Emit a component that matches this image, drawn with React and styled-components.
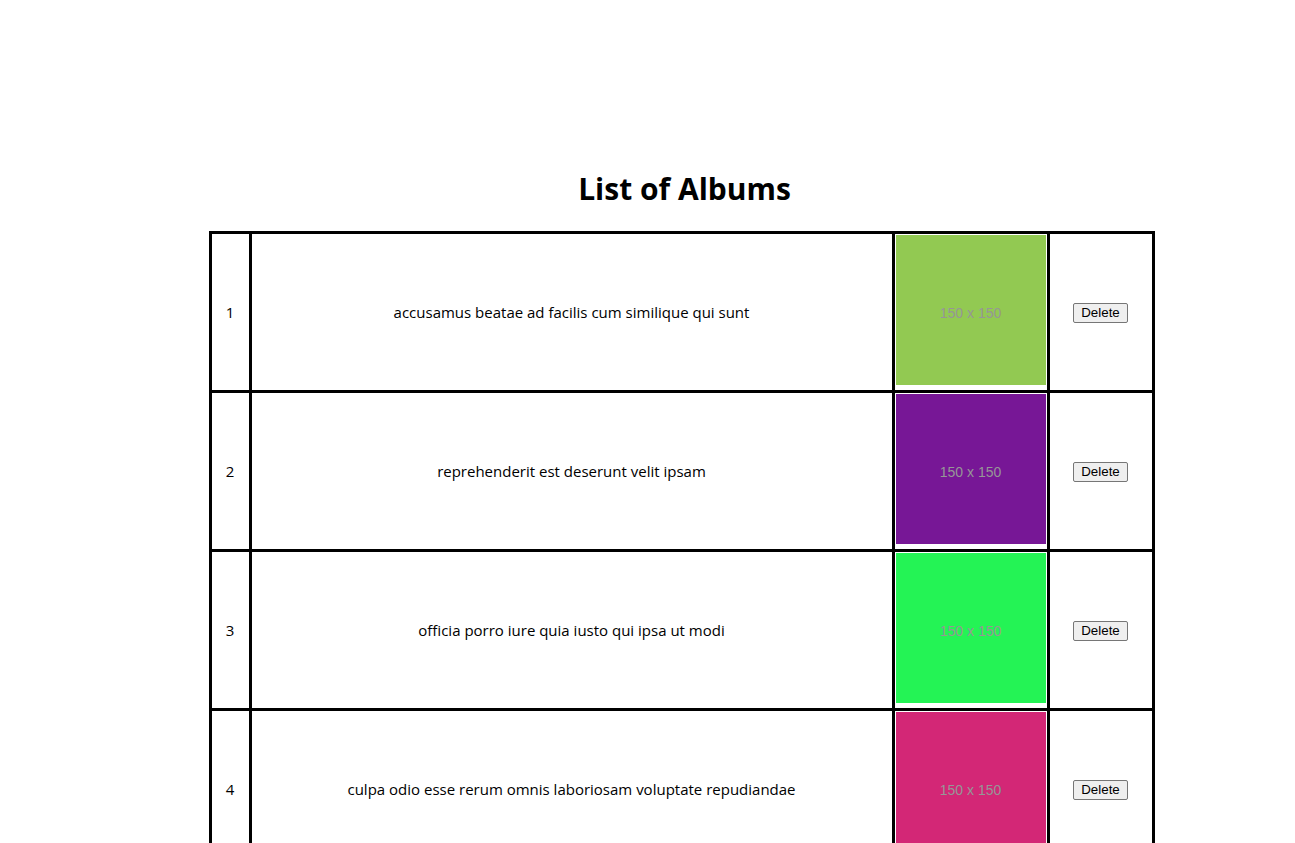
import React from "react";
import styled, { createGlobalStyle } from "styled-components";

const Global = createGlobalStyle`
  html, body { margin: 0; padding: 0; background: #fff; }
  body { font-family: "Open Sans", "Noto Sans", sans-serif; color: #000; }
`;

const Page = styled.div`
  padding: 147px 0 0 68px;
  display: flex;
  flex-direction: column;
  align-items: center;
`;

const Title = styled.h1`
  margin: 21px 0 21px 6px;
  font-size: 30px;
  font-weight: 700;
  line-height: 42px;
`;

const Table = styled.table`
  width: 946px;
  border-collapse: collapse;
  border: 3px solid #000;
  font-size: 15px;
`;

const Cell = styled.td`
  border: 3px solid #000;
  padding: 1px;
  text-align: center;
  vertical-align: middle;
  width: ${(p) => p.$w || "auto"};
`;

const Thumb = styled.div`
  width: 150px;
  height: 150px;
  box-sizing: border-box;
  padding-top: 6px;
  margin: 0 0 4px;
  background: ${(p) => p.$color};
  display: flex;
  align-items: center;
  justify-content: center;
  font-family: "Liberation Sans", Arial, sans-serif;
  font-size: 14px;
  color: #969696;
`;

const Button = styled.button`
  font-family: "Liberation Sans", Arial, sans-serif;
  font-size: 13.33px;
  padding: 1px 7px;
  border: 1px solid #767676;
  border-radius: 2px;
  background: #efefef;
  color: #000;
  line-height: 16px;
`;

const albums = [
  { id: 1, title: "accusamus beatae ad facilis cum similique qui sunt", color: "#92c952" },
  { id: 2, title: "reprehenderit est deserunt velit ipsam", color: "#771796" },
  { id: 3, title: "officia porro iure quia iusto qui ipsa ut modi", color: "#24f355" },
  { id: 4, title: "culpa odio esse rerum omnis laboriosam voluptate repudiandae", color: "#d32776" },
  { id: 5, title: "natus nisi omnis corporis facere molestiae rerum in", color: "#f66b97" },
];

export default function App() {
  return (
    <>
      <Global />
      <Page>
        <Title>List of Albums</Title>
        <Table>
          <tbody>
            {albums.map((a) => (
              <tr key={a.id}>
                <Cell $w="35px">{a.id}</Cell>
                <Cell>{a.title}</Cell>
                <Cell $w="150px">
                  <Thumb $color={a.color}>150 x 150</Thumb>
                </Cell>
                <Cell $w="100px">
                  <Button>Delete</Button>
                </Cell>
              </tr>
            ))}
          </tbody>
        </Table>
      </Page>
    </>
  );
}
